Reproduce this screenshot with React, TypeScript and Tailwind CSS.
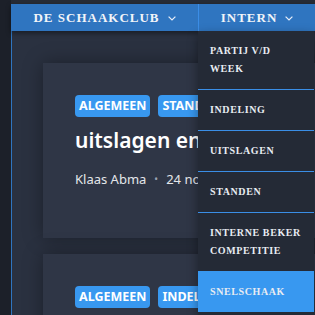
const serif = { fontFamily: '"Liberation Serif", serif' };

const Chevron = () => (
  <svg width="8" height="5" viewBox="0 0 8 5" fill="none" className="ml-[8px] mt-[2px]">
    <path d="M0.6 0.6 L4 4 L7.4 0.6" stroke="#e8eef8" strokeWidth="1.2" />
  </svg>
);

const menu = [
  { label: "PARTIJ V/D WEEK" },
  { label: "INDELING" },
  { label: "UITSLAGEN" },
  { label: "STANDEN" },
  { label: "INTERNE BEKER COMPETITIE" },
  { label: "SNELSCHAAK", active: true },
];

const Card = ({ tags, title, meta }: { tags: string[]; title: string; meta: boolean }) => (
  <div className="w-[320px] h-[175px] shrink-0 bg-[#2f3646] shadow-[0_0_18px_rgba(0,0,0,0.35)] pl-[32px] pt-[32px]">
    <div className="flex gap-[8px]">
      {tags.map((t) => (
        <span
          key={t}
          className="bg-[#3898f0] text-white font-bold text-[12.5px] leading-[16px] px-[4px] py-[3px] rounded-[4px]"
        >
          {t}
        </span>
      ))}
    </div>
    <div className="mt-[9px] text-[21px] leading-[28px] font-semibold text-white whitespace-nowrap">{title}</div>
    {meta && (
      <div className="mt-[15px] text-[13px] leading-[20px] text-[#e4e6ea] flex items-center whitespace-nowrap">
        <span>Klaas Abma</span>
        <span className="mx-[8px] text-[#9aa3b2] text-[10px]">•</span>
        <span>24 november 2023</span>
      </div>
    )}
  </div>
);

export default function App() {
  return (
    <div
      className="w-[315px] h-[315px] overflow-hidden bg-[#1c2029] flex"
      style={{ fontFamily: '"Noto Sans", sans-serif' }}
    >
      <div className="w-[11px] shrink-0" />
      <div className="flex-1 flex flex-col min-w-0">
        <div className="h-[4px] bg-[#272c36] shrink-0" />
        <nav className="h-[27px] shrink-0 bg-[#2f75c0] flex relative z-20 shadow-[0_2px_5px_rgba(0,0,0,0.45)]">
          <div
            className="w-[187px] flex items-center justify-center text-[13px] font-bold tracking-[1px] text-[#f2f4f8]"
            style={serif}
          >
            DE SCHAAKCLUB
            <Chevron />
          </div>
          <div
            className="flex-1 relative border-l border-[#3b8de6] flex items-center justify-center text-[13px] font-bold tracking-[1px] text-[#f2f4f8]"
            style={serif}
          >
            INTERN
            <Chevron />
            <div className="absolute top-full left-[-1px] w-[116px] bg-[#242a36] pb-[4px] shadow-[0_4px_10px_rgba(0,0,0,0.4)]">
              {menu.map((m, i) => (
                <div
                  key={m.label}
                  className={`px-[12px] py-[11px] text-[10px] leading-[18px] tracking-[0.6px] font-bold text-[#e8ecf2] ${
                    i > 0 ? "border-t border-[#3a8ee6]" : ""
                  } ${m.active ? "bg-[#3898f0] border-[#3898f0]" : ""}`}
                >
                  {m.label}
                </div>
              ))}
            </div>
          </div>
        </nav>
        <main className="flex-1 bg-[#2a3140] border-l border-[#2f75c0] pl-[31px] pt-[32px] flex flex-col gap-[16px] overflow-hidden">
          <Card tags={["ALGEMEEN", "STANDEN"]} title="uitslagen en standen" meta />
          <Card tags={["ALGEMEEN", "INDELING"]} title="indeling ronde 8" meta={false} />
        </main>
      </div>
    </div>
  );
}
